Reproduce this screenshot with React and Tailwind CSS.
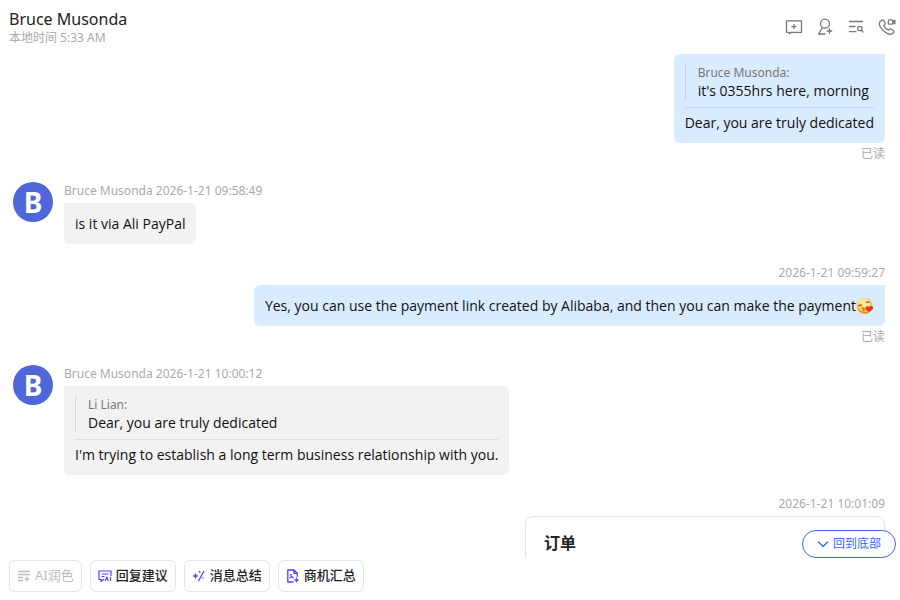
import clsx from "clsx";

const messages = [
  {
    id: 1,
    mine: true,
    quote: { from: "Bruce Musonda", text: "it's 0355hrs here, morning" },
    text: "Dear, you are truly dedicated",
    read: true,
  },
  { id: 2, from: "Bruce Musonda", time: "2026-1-21 09:58:49", text: "is it via Ali PayPal" },
  {
    id: 3,
    mine: true,
    time: "2026-1-21 09:59:27",
    text: "Yes, you can use the payment link created by Alibaba, and then you can make the payment",
    kiss: true,
    read: true,
  },
  {
    id: 4,
    from: "Bruce Musonda",
    time: "2026-1-21 10:00:12",
    quote: { from: "Li Lian", text: "Dear, you are truly dedicated" },
    text: "I'm trying to establish a long term business relationship with you.",
  },
];

const stroke = { fill: "none", stroke: "currentColor", strokeLinecap: "round", strokeLinejoin: "round" };

/* Header icons */
function AddChatIcon() {
  return (
    <svg width="18" height="18" viewBox="0 0 18 18" strokeWidth="1.3" {...stroke}>
      <path d="M1.500 2.800h15v11.500H6.500L4.500 15.800v-1.500h-3zM9 6.500v4.200M6.900 8.600h4.200" />
    </svg>
  );
}

function AddUserIcon() {
  return (
    <svg width="18" height="18" viewBox="0 0 18 18" strokeWidth="1.3" {...stroke}>
      <circle cx="9" cy="5.700" r="4.500" />
      <path d="M6.500 9.700 2.500 16h6.500M13.400 10.700v4.600M11.100 13h4.600" />
    </svg>
  );
}

function SearchListIcon() {
  return (
    <svg width="18" height="18" viewBox="0 0 18 18" strokeWidth="1.3" {...stroke}>
      <path d="M2.500 3.500h13M2.500 8.500h5.500M2.500 13.700h6.500" />
      <circle cx="12.800" cy="10.500" r="2.200" />
      <path d="m14.400 12.200 1.600 1.800" />
    </svg>
  );
}

function CallIcon() {
  return (
    <svg width="18" height="18" viewBox="0 0 18 18" strokeWidth="1.3" {...stroke}>
      <path d="M3.200 2.600c.9-.9 1.800-.8 2.500.1l1.200 1.800c.5.8.4 1.500-.2 2.100l-.9.9c.6 1.800 2.600 3.900 4.600 4.700l1-.9c.7-.5 1.300-.6 2-.1l1.900 1.300c.9.7 1 1.500.2 2.300-1.400 1.600-3.200 1.900-5.400 1C6.600 14.200 3 10.500 1.700 7.400c-.8-2-.2-3.500 1.500-4.800z" />
      <rect x="10.300" y="1.800" width="4.600" height="4.400" rx="1" />
      <path d="m14.900 3.600 2-1.200v3.400l-2-1.200" />
    </svg>
  );
}

/* Toolbar icons */
function PolishIcon() {
  return (
    <svg width="14" height="14" viewBox="0 0 14 14" strokeWidth="1.300" {...stroke}>
      <path d="M1.500 2.500h11M1.500 5.500h11M1.500 8.500h4M1.500 11.500h4" />
      <path d="m9.800 7.600.7 1.700 1.700.7-1.700.7-.7 1.700-.7-1.700-1.700-.7 1.700-.7z" fill="currentColor" strokeWidth="0.400" />
    </svg>
  );
}

function ReplyIcon() {
  return (
    <svg width="14" height="14" viewBox="0 0 14 14" strokeWidth="1.200" {...stroke}>
      <path d="M13 6.500V2H1v8.500h2V12.500l2.500-2M4 5h6M4 7.500h2" />
      <path d="m8.800 8 1.300 3.500M8.800 8l-1.500 3.500M12.500 8.300v3.200" />
    </svg>
  );
}

function SummaryIcon() {
  return (
    <svg width="14" height="14" viewBox="0 0 14 14" strokeWidth="1.300" {...stroke}>
      <path d="m3.500 4.300.8 1.900 1.900.8-1.900.8-.8 1.900-.8-1.900L.8 7l1.900-.8z" fill="currentColor" strokeWidth="0.400" />
      <path d="M11.800 2.200 6.700 11.800M7.300 2.500l.7.900M10.800 8.800v.1" />
    </svg>
  );
}

function OpportunityIcon() {
  return (
    <svg width="14" height="14" viewBox="0 0 14 14" strokeWidth="1.300" {...stroke}>
      <path d="M7 13H1.800V1H8l3.300 3.300v3M8 1v3.300h3.300M4 5.800h1.500M4 8.800l1.700-1.300 1.500 1.200" />
      <path d="m10.500 8.500.7 1.800 1.800.7-1.800.7-.7 1.800-.7-1.800L8 11l1.800-.7z" fill="currentColor" strokeWidth="0.400" />
    </svg>
  );
}

function KissFace() {
  return (
    <svg width="18" height="18" viewBox="0 0 18 18" className="shrink-0" role="img" aria-label="kiss">
      <circle cx="8.500" cy="9" r="8" fill="#f9c64a" />
      <ellipse cx="8" cy="6" rx="6" ry="4.500" fill="#fde59a" />
      <path d="M1.500 11.500c2 5 8.500 6.500 12 3.500-4 .5-9-.5-12-3.500z" fill="#e8892b" />
      <path d="M2.800 8.700c.8-1 2-1 2.800-.2M10.500 5.500c.8-1 2-.8 2.500.1" fill="none" stroke="#8a4a16" strokeWidth="1.100" strokeLinecap="round" />
      <path d="M6.500 11c1.500-.5 2.200.3 1 1.100 1.300 0 1.500 1 .2 1.500" fill="none" stroke="#a3401c" strokeWidth="1" strokeLinecap="round" />
      <path d="M13 15.200c-2.700-1.800-4.200-3.600-3.200-5.200.9-1.300 2.500-.8 3 .4.900-1.500 3-2 4-.6 1.200 1.800-1.200 4-3.800 5.400z" fill="#e3342b" />
    </svg>
  );
}

const actions = [
  { label: "AI润色", icon: PolishIcon, disabled: true },
  { label: "回复建议", icon: ReplyIcon },
  { label: "消息总结", icon: SummaryIcon },
  { label: "商机汇总", icon: OpportunityIcon },
];

const tools = [
  { label: "新建会话", icon: AddChatIcon },
  { label: "添加联系人", icon: AddUserIcon },
  { label: "搜索记录", icon: SearchListIcon },
  { label: "通话", icon: CallIcon },
];

function Message({ msg }) {
  return (
    <div className={clsx("flex", msg.mine && "justify-end")}>
      {!msg.mine && (
        <div className="mr-[11px] flex size-10 shrink-0 items-center justify-center rounded-full bg-[#4f67d8] text-[28px] leading-10 font-bold text-white">
          B
        </div>
      )}
      <div className={clsx("flex min-w-0 flex-col", msg.mine ? "items-end" : "items-start")}>
        {msg.time && (
          <p className="mb-[3px] text-xs leading-[18px] text-[#aaaaaa]">
            {msg.from} {msg.time}
          </p>
        )}
        <div
          className={clsx(
            "rounded-md px-[11px] py-2.5 font-['Open_Sans','Noto_Sans_CJK_SC',sans-serif] text-sm leading-[21px] text-[#111111]",
            msg.mine ? "rounded-tr-none bg-[#d9ebff]" : "rounded-tl-none bg-[#f2f2f2]"
          )}
        >
          {msg.quote && (
            <div className="mb-1 border-b border-black/8 pb-[7px]">
              <blockquote className="border-l border-black/10 pl-3 leading-[18px]">
                <p className="font-['Noto_Sans','Noto_Sans_CJK_SC',sans-serif] text-xs leading-[18px] text-[#777777]">
                  {msg.quote.from}:
                </p>
                <p>{msg.quote.text}</p>
              </blockquote>
            </div>
          )}
          <div className="flex items-center">
            <p>{msg.text}</p>
            {msg.kiss && <KissFace />}
          </div>
        </div>
        {msg.read && <p className="mt-[3px] text-xs leading-4 text-[#aaaaaa]">已读</p>}
      </div>
    </div>
  );
}

export default function App() {
  return (
    <div className="flex h-screen flex-col bg-white font-['Noto_Sans','Noto_Sans_CJK_SC',sans-serif]">
      <header className="flex shrink-0 items-start justify-between pt-2 pr-1 pb-2 pl-[9px]">
        <div>
          <h1 className="text-base leading-[22px] text-[#222222]">Bruce Musonda</h1>
          <p className="text-xs leading-4 text-[#aaaaaa]">本地时间 5:33 AM</p>
        </div>
        <div className="flex gap-[13px] pt-2.5 text-[#777777]">
          {tools.map(({ label, icon: Icon }) => (
            <button key={label} type="button" aria-label={label}>
              <Icon />
            </button>
          ))}
        </div>
      </header>

      <main className="relative min-h-0 flex-1">
        <div className="flex h-full flex-col gap-5 overflow-hidden pr-[15px] pl-[13px]">
          {messages.map((msg) => (
            <Message key={msg.id} msg={msg} />
          ))}

          {/* Order card, continues below the fold */}
          <div className="flex shrink-0 flex-col items-end">
            <p className="mb-[3px] text-xs leading-[18px] text-[#aaaaaa]">2026-1-21 10:01:09</p>
            <div className="w-[360px] rounded-lg border border-[#e4e4e4] px-[18px] pt-3.5 pb-10">
              <h2 className="text-base leading-6 font-bold text-[#222222]">订单</h2>
            </div>
          </div>
        </div>

        <button
          type="button"
          className="absolute right-1 bottom-0 flex h-7 items-center gap-1 rounded-full border border-[#3b66f5] bg-white px-3.5 text-xs text-[#3b66f5]"
        >
          <svg width="12" height="12" viewBox="0 0 12 12" strokeWidth="1.300" {...stroke}>
            <path d="m1.500 4 4.500 4.500L10.500 4" />
          </svg>
          回到底部
        </button>
      </main>

      <footer className="flex shrink-0 gap-2 pt-0.5 pb-2 pl-[9px]">
        {actions.map(({ label, icon: Icon, disabled }) => (
          <button
            key={label}
            type="button"
            disabled={disabled}
            className="group flex h-8 items-center gap-1 rounded-md border border-[#e4e4e4] px-[7px] text-[13px] font-medium text-[#222222] disabled:font-normal disabled:text-[#bbbbbb]"
          >
            <span className="text-[#5b3df5] group-disabled:text-[#bbbbbb]">
              <Icon />
            </span>
            {label}
          </button>
        ))}
      </footer>
    </div>
  );
}
